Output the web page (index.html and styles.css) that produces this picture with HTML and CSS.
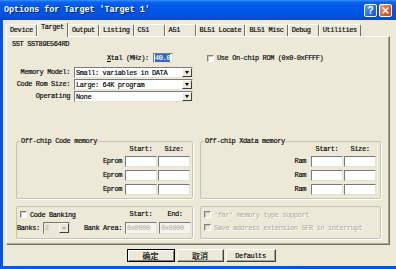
FILE: index.html
```html
<!DOCTYPE html>
<html lang="en">
<head>
<meta charset="utf-8">
<title>Options for Target</title>
<link rel="stylesheet" href="styles.css">
</head>
<body>
<div class="window">
  <div class="titlebar">
    <span class="title">Options for Target 'Target 1'</span>
    <div class="tbtns">
      <span class="tb help">?</span>
      <span class="tb close"><svg width="7" height="7" viewBox="0 0 7 7"><path d="M1 1L6 6M6 1L1 6" stroke="#fff" stroke-width="1.6" stroke-linecap="round"/></svg></span>
    </div>
  </div>
  <div class="client">
    <div class="tabs">
      <span class="tab">Device</span>
      <span class="tab sel">Target</span>
      <span class="tab">Output</span>
      <span class="tab">Listing</span>
      <span class="tab">C51</span>
      <span class="tab">A51</span>
      <span class="tab">BL51 Locate</span>
      <span class="tab">BL51 Misc</span>
      <span class="tab">Debug</span>
      <span class="tab">Utilities</span>
    </div>
    <div class="panel">
      <div class="device">SST SST89E564RD</div>
      <div class="top">
        <div class="form">
          <div class="xtal-row">
            <span class="xlabel"><u>X</u>tal (MHz):</span>
            <span class="field xtal"><span class="hl">40.0</span></span>
          </div>
          <span class="lbl">Memory Model:</span>
          <span class="select">Small: variables in DATA<span class="arrow"></span></span>
          <span class="lbl">Code Rom Size:</span>
          <span class="select">Large: 64K program<span class="arrow"></span></span>
          <span class="lbl">Operating</span>
          <span class="select">None<span class="arrow"></span></span>
        </div>
        <div class="check-line rom"><span class="check"></span>Use On-chip ROM (0x0-0xFFFF)</div>
      </div>
      <div class="groups">
        <fieldset class="group code">
          <legend>Off-chip Code memory</legend>
          <div class="memgrid">
            <span></span><span class="hdr">Start:</span><span class="hdr">Size:</span>
            <span class="rlbl">Eprom</span><span class="field"></span><span class="field"></span>
            <span class="rlbl">Eprom</span><span class="field"></span><span class="field"></span>
            <span class="rlbl">Eprom</span><span class="field"></span><span class="field"></span>
          </div>
        </fieldset>
        <fieldset class="group xdata">
          <legend>Off-chip Xdata memory</legend>
          <div class="memgrid">
            <span></span><span class="hdr">Start:</span><span class="hdr">Size:</span>
            <span class="rlbl">Ram</span><span class="field"></span><span class="field"></span>
            <span class="rlbl">Ram</span><span class="field"></span><span class="field"></span>
            <span class="rlbl">Ram</span><span class="field"></span><span class="field"></span>
          </div>
        </fieldset>
        <fieldset class="group bank">
          <div class="bankgrid">
            <div class="check-line"><span class="check"></span>Code Banking</div>
            <span class="hdr">Start:</span><span class="hdr">End:</span>
            <div class="banks-row">
              <span>Banks:</span>
              <span class="select dis mini">2<span class="arrow"></span></span>
              <span class="barea">Bank Area:</span>
            </div>
            <span class="field dis">0x0000</span><span class="field dis">0x0000</span>
          </div>
        </fieldset>
        <fieldset class="group opts">
          <div class="check-line dis"><span class="check"></span>'far' memory type support</div>
          <div class="check-line dis"><span class="check"></span>Save address extension SFR in interrupt</div>
        </fieldset>
      </div>
    </div>
    <div class="buttons">
      <button class="btn def"><span class="cjk">确定</span></button>
      <button class="btn cancel"><span class="cjk">取消</span></button>
      <button class="btn wide">Defaults</button>
    </div>
  </div>
</div>
</body>
</html>
```

FILE: styles.css
```css
* { box-sizing: border-box; }
html, body { margin: 0; padding: 0; }
body {
  width: 396px; height: 269px; overflow: hidden;
  background: #ece9d8;
  font-family: "Liberation Mono", "DejaVu Sans Mono", monospace;
  font-size: 7px; letter-spacing: -0.4px; color: #000;
  -webkit-text-stroke: 0.15px #000;
}
.window {
  width: 396px; height: 269px;
  display: flex; flex-direction: column;
  background: linear-gradient(to right, #0a4fd6, #0058ee 2px, #0054e3);
}
.titlebar {
  height: 20px; flex: none;
  display: flex; align-items: center;
  padding-left: 4px;
  background: linear-gradient(to bottom, #3d8ffc 0, #0a64f2 2px, #0058ea 6px, #0054e3 12px, #0350dc 17px, #0a48c4 20px);
  color: #fff;
}
.title {
  flex: 1;
  font-weight: bold; font-size: 8.4px; letter-spacing: 0;
  text-shadow: 1px 1px #0a246a;
  -webkit-text-stroke: 0;
}
.tbtns { display: flex; gap: 2px; margin-right: 4px; }
.tb {
  width: 13px; height: 13px;
  border: 1px solid #fff; border-radius: 2px;
  display: flex; align-items: center; justify-content: center;
}
.help {
  background: linear-gradient(135deg, #6aa6ff, #2a66ea 60%, #1d55d8);
  color: #fff; font: bold 10px "Liberation Sans", sans-serif; letter-spacing: 0;
  -webkit-text-stroke: 0;
}
.close { background: linear-gradient(135deg, #f39a70, #e0582a 60%, #c94418); }

.client {
  flex: 1;
  margin: 0 0 3px 3px;
  padding: 2px 0 0 3px;
  background: #ece9d8;
  display: flex; flex-direction: column;
}

.tabs { display: flex; align-items: flex-end; height: 14px; flex: none; }
.tab {
  height: 12px; min-width: 31px;
  padding: 0 3px;
  line-height: 11px;
  border: 1px solid; border-bottom: 0;
  border-color: #fff #716f64 transparent #fff;
  border-radius: 2px 2px 0 0;
  white-space: nowrap;
}
.tab.sel {
  height: 15px; margin-bottom: -1px;
  line-height: 9px;
  background: #ece9d8;
  position: relative; z-index: 1;
}

.panel {
  width: 384px; height: 209px; flex: none;
  border: 1px solid; border-color: #fff #716f64 #716f64 #fff;
  box-shadow: inset -1px -1px #aca899;
  padding: 2px 0 0 5px;
}
.device { height: 10px; line-height: 10px; }

.top { display: flex; margin-top: 4px; }
.form {
  display: grid;
  grid-template-columns: 58px 119px;
  column-gap: 4px; row-gap: 1px;
}
.xtal-row {
  grid-column: 1 / -1;
  display: flex; align-items: center;
  height: 10px; padding-left: 95px; margin-bottom: 3px;
}
.xlabel { width: 46px; }
.lbl { text-align: right; line-height: 11px; white-space: nowrap; }

.field {
  display: block; background: #fff;
  border: 1px solid; border-color: #7a7a7a #e4e2d6 #e4e2d6 #7a7a7a;
  height: 11px;
}
.field.xtal { width: 20px; height: 10px; line-height: 8px; padding-left: 1px; }
.hl { background: #316ac5; color: #fff; -webkit-text-stroke: 0.15px #fff; }
.field.dis {
  background: #f4f3ee; color: #aca899;
  -webkit-text-stroke: 0;
  line-height: 10px; padding-left: 1px;
  height: 12px;
}

.select {
  height: 11px;
  display: flex; align-items: center;
  background: #fff;
  border: 1px solid; border-color: #7a7a7a #e4e2d6 #e4e2d6 #7a7a7a;
  padding-left: 1px;
  white-space: nowrap;
}
.arrow {
  margin-left: auto;
  width: 10px; height: 9px;
  background: #ece9d8;
  border: 1px solid; border-color: #fff #404040 #404040 #fff;
  display: flex; align-items: center; justify-content: center;
}
.arrow::before {
  content: "";
  border-left: 2.5px solid transparent; border-right: 2.5px solid transparent;
  border-top: 3px solid #000;
}
.select.dis { background: #ece9d8; color: #aca899; -webkit-text-stroke: 0; }
.select.dis .arrow::before { border-top-color: #aca899; }
.select.mini { width: 27px; height: 12px; margin-left: 3px; }
.select.mini .arrow { height: 10px; }

.check-line { display: flex; align-items: center; height: 9px; white-space: nowrap; }
.rom { margin-left: 14px; height: 10px; }
.check {
  width: 7px; height: 7px; flex: none;
  background: #fff;
  border: 1px solid; border-color: #808080 #fff #fff #808080;
  box-shadow: inset 1px 1px #c8c6bc;
  margin-right: 3px;
}
.check-line.dis { color: #aca899; text-shadow: 1px 1px #fff; -webkit-text-stroke: 0; }
.check-line.dis .check { background: #ece9d8; }

.groups {
  display: grid;
  grid-template-columns: 177px 181px;
  column-gap: 7px; row-gap: 7px;
  margin: 35px 0 0 4px;
}
fieldset.group {
  margin: 0; min-width: 0;
  border: 1px solid #c5c2b2; border-radius: 2px;
  box-shadow: 1px 1px #fff;
}
legend { margin-left: 3px; padding: 0 1px; line-height: 8px; }
.group.code { padding: 0 2px 3px 0; }
.group.xdata { padding: 0 4px 3px 0; }
.memgrid {
  display: grid;
  grid-template-columns: 1fr 32px 32px;
  grid-template-rows: 8px 11px 11px 11px;
  column-gap: 1px; row-gap: 3px;
}
.memgrid .hdr { margin-bottom: -1px; }
.hdr { text-align: center; line-height: 8px; white-space: nowrap; }
.rlbl { text-align: right; line-height: 11px; }
.code .rlbl { padding-right: 2px; }
.xdata .rlbl { padding-right: 4px; }

.group.bank { padding: 3px 1px 4px 0; }
.bankgrid {
  display: grid;
  grid-template-columns: 1fr 32px 32px;
  grid-template-rows: 9px 12px;
  column-gap: 2px; row-gap: 3px;
}
.bankgrid .check-line .check { margin-left: 3px; }
.bankgrid .hdr { line-height: 9px; }
.banks-row { display: flex; align-items: center; white-space: nowrap; }
.barea { margin-left: auto; padding-right: 1px; }

.group.opts {
  padding: 3px 0 0 3px;
  display: flex; flex-direction: column; gap: 4px;
}

.buttons {
  display: flex; justify-content: center; gap: 2px;
  margin-top: 4px;
}
.btn {
  height: 13px; width: 47px; padding: 0;
  display: flex; align-items: center; justify-content: center;
  font-family: inherit; font-size: 7px; letter-spacing: -0.4px; color: #000;
  -webkit-text-stroke: 0.15px #000;
  background: #ece9d8;
  border: 1px solid; border-color: #fff #404040 #404040 #fff;
  box-shadow: inset -1px -1px #aca899;
  overflow: hidden;
}
.btn.def {
  width: 48px;
  border-color: #000;
  box-shadow: inset 1px 1px #fff, inset -1px -1px #808080;
}
.btn.wide { width: 50px; }
.cjk {
  font-family: "Noto Sans CJK SC", "Noto Sans CJK JP", sans-serif;
  font-size: 8px; letter-spacing: 0; line-height: 9px;
  display: block;
}
```
